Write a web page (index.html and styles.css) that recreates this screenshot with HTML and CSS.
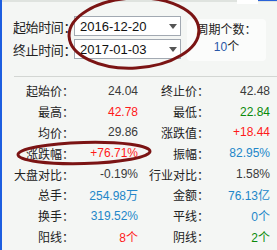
FILE: index.html
```html
<!DOCTYPE html>
<html>
  <head>
    <meta charset="utf-8">
    <link rel="stylesheet" href="styles.css">
  </head>
  <body>
    <div class="frame">
      <div class="topbar"><span class="tab"></span><span class="edge"></span></div>
      <div class="query">
        <div class="dates">
          <div class="field">
            <span class="flabel">起始时间：</span>
            <div class="combo"><span>2016-12-20</span><i class="arrow"></i></div>
          </div>
          <div class="field">
            <span class="flabel">终止时间：</span>
            <div class="combo"><span>2017-01-03</span><i class="arrow"></i></div>
          </div>
        </div>
        <div class="period">
          <div>周期个数：</div>
          <div><span class="navy">10</span>个</div>
        </div>
      </div>
      <div class="sep"></div>
      <div class="stats">
        <span class="lbl">起始价：</span><span class="val">24.04</span>
        <span class="lbl">终止价：</span><span class="val">42.48</span>

        <span class="lbl">最高：</span><span class="val up">42.78</span>
        <span class="lbl">最低：</span><span class="val down">22.84</span>

        <span class="lbl">均价：</span><span class="val">29.86</span>
        <span class="lbl">涨跌值：</span><span class="val up">+18.44</span>

        <span class="lbl">涨跌幅：</span><span class="val up">+76.71%</span>
        <span class="lbl">振幅：</span><span class="val blue">82.95%</span>

        <span class="lbl">大盘对比：</span><span class="val">-0.19%</span>
        <span class="lbl">行业对比：</span><span class="val">1.58%</span>

        <span class="lbl">总手：</span><span class="val blue">254.98万</span>
        <span class="lbl">金额：</span><span class="val blue">76.13亿</span>

        <span class="lbl">换手：</span><span class="val blue">319.52%</span>
        <span class="lbl">平线：</span><span class="val blue">0个</span>

        <span class="lbl">阳线：</span><span class="val up">8个</span>
        <span class="lbl">阴线：</span><span class="val down">2个</span>
      </div>
      <!-- hand drawn marks over the panel -->
      <svg class="marks" width="277" height="250" viewBox="0 0 277 250">
        <ellipse cx="134" cy="33" rx="65" ry="35" transform="rotate(-3 134 33)"/>
        <ellipse cx="84" cy="153" rx="66" ry="10.5" transform="rotate(-1.5 84 153)"/>
      </svg>
    </div>
  </body>
</html>
```

FILE: styles.css
```css
body {
  margin: 0;
}
.frame {
  position: relative;
  width: 277px;
  height: 250px;
  box-sizing: border-box;
  border-left: 2px solid #1d5ee0;
  background: #f4f6f4;
  font-family: "Liberation Sans", "Noto Sans CJK SC", sans-serif;
  color: #222;
  overflow: hidden;
}
.topbar {
  display: flex;
  justify-content: flex-end;
  height: 2px;
  background: #dfe3df;
}
.topbar .tab {
  width: 21px;
  height: 4px;
  background: #fff;
}
.topbar .edge {
  width: 19px;
  height: 1px;
  background: #2a62d8;
}

.query {
  display: flex;
  align-items: flex-start;
  padding: 14px 0 0 11px;
}
.dates {
  display: flex;
  flex-direction: column;
  gap: 3px;
}
.field {
  display: flex;
  align-items: center;
  height: 20px;
}
.flabel {
  flex: none;
  width: 61px;
  font-size: 13px;
  letter-spacing: -0.4px;
  white-space: nowrap;
}
.combo {
  position: relative;
  display: flex;
  align-items: center;
  justify-content: space-between;
  width: 107px;
  height: 20px;
  box-sizing: border-box;
  padding: 0 3px 0 5px;
  border: 1px solid #a2a9b2;
  background: #fff;
  font-size: 13px;
  color: #111;
}
.arrow {
  width: 0;
  height: 0;
  border-left: 4.5px solid transparent;
  border-right: 4.5px solid transparent;
  border-top: 5px solid #555;
}
.period {
  width: 79px;
  height: 42px;
  box-sizing: border-box;
  margin: 3px 0 0 6px;
  padding-top: 3px;
  border-radius: 4px;
  background: #fbfcfb;
  font-size: 12px;
  line-height: 17px;
  text-align: center;
}
.navy {
  color: #2a58a8;
}

.sep {
  height: 1px;
  margin: 15px 0 0 12px;
  background: #d3d6d3;
}
.stats {
  display: grid;
  grid-template-columns: 60px 64px 71px 61px;
  grid-auto-rows: 20.8px;
  align-items: center;
  padding: 3.5px 0 0 12px;
  font-size: 12px;
}
.lbl {
  text-align: right;
  color: #222;
}
.val {
  text-align: right;
  color: #3a3a3a;
}
.up {
  color: #ff1a1a;
}
.down {
  color: #0a8a0a;
}
.blue {
  color: #2286c9;
}

.marks {
  position: absolute;
  left: -2px;
  top: 0;
  fill: none;
  stroke: #7b1414;
  stroke-width: 3;
}
```
